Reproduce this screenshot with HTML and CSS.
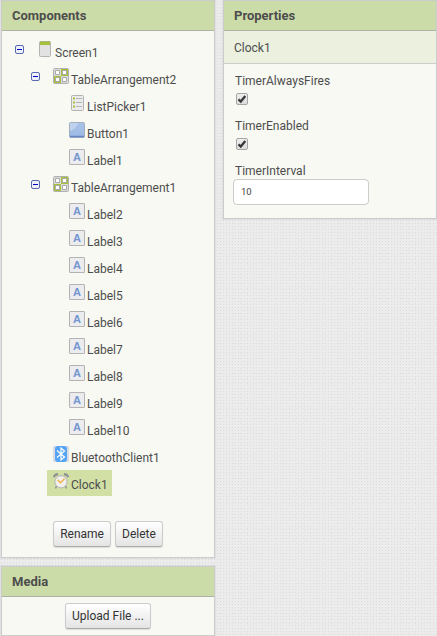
FILE: index.html
```html
<!DOCTYPE html>
<html lang="en">
<head>
<meta charset="utf-8">
<title>Designer</title>
<link rel="stylesheet" href="styles.css">
</head>
<body>
<svg class="defs" width="0" height="0">
  <symbol id="minus" viewBox="0 0 9 9"><rect x=".5" y=".5" width="8" height="8" rx="1.5" fill="#eef1fb" stroke="#5a6ab0"/><path d="M2 4.500h5" stroke="#0000c8"/></symbol>
  <symbol id="screen" viewBox="0 0 16 16"><rect x="2.500" y=".5" width="11" height="15" rx="1" fill="#e2e2e2" stroke="#b3b3b3"/><path d="M3 1h10v3H3z" fill="#a5c13c"/><path d="M3 .5h10" stroke="#a9b57e"/></symbol>
  <symbol id="table" viewBox="0 0 16 16"><rect x=".5" y=".5" width="15" height="15" rx="1" fill="#dcdcdc" stroke="#b0b0b0"/><path d="M8 1h7v7H8zM1 8h7v7H1z" fill="#a5c13c"/><g fill="#fff" stroke="#a9a9a9"><path d="M2.500 2.500h4v4h-4zM9.500 2.500h4v4h-4zM2.500 9.500h4v4h-4zM9.500 9.500h4v4h-4z"/></g></symbol>
  <symbol id="list" viewBox="0 0 16 16"><rect x="2.500" y=".5" width="12" height="15" rx="1" fill="#ebebeb" stroke="#b3b3b3"/><path d="M4 3.500h2M4 7.500h2M4 11.500h2" stroke="#a5c13c" stroke-width="2"/><path d="M7 3.500h6M7 7.500h6M7 11.500h6" stroke="#b5b5b5"/></symbol>
  <symbol id="button" viewBox="0 0 16 16"><defs><linearGradient id="bg" x2="0" y2="1"><stop stop-color="#a9c3e8"/><stop offset="1" stop-color="#9dbae5"/></linearGradient></defs><rect x=".5" y=".5" width="15" height="15" rx="1" fill="url(#bg)" stroke="#a3adbd"/><path d="M1 1h8Q8 6 1 9z" fill="#c0d3ee"/><path d="M1 14.500h14" stroke="#6487c4" stroke-width="1.500"/></symbol>
  <symbol id="bt" viewBox="0 0 16 16"><path d="M0 0h16v16H0z" fill="#d9dde3"/><rect x="2" y="0" width="12" height="16" rx="3" fill="#55a4f5"/><path d="M4 4.500l7.500 6.500L8 14V2l3.500 3L4 11.500" fill="none" stroke="#fff" stroke-width="1.200"/></symbol>
  <symbol id="clock" viewBox="0 0 16 16"><path d="M.8 4.200Q1.500 1.500 5 1M15.200 4.200Q14.500 1.500 11 1" fill="none" stroke="#939393" stroke-width="2.400"/><path d="M3.500 13L2.500 15.500M12.500 13l1 2.500" stroke="#939393" stroke-width="1.500"/><circle cx="8" cy="8.800" r="6.100" fill="#f2f0ed" stroke="#b5b5b5"/><path d="M4.500 6.800L7.500 9.800L11.500 5.800" fill="none" stroke="#f1b24f" stroke-width="1.500"/></symbol>
</svg>
<main class="page">
  <div class="column">
    <section class="panel components">
      <h2>Components</h2>
      <ul class="tree">
        <li class="l0"><svg class="toggle"><use href="#minus"/></svg><span class="item"><svg class="icon"><use href="#screen"/></svg>Screen1</span></li>
        <li class="l1"><svg class="toggle"><use href="#minus"/></svg><span class="item"><svg class="icon"><use href="#table"/></svg>TableArrangement2</span></li>
        <li class="l2"><span class="item"><svg class="icon"><use href="#list"/></svg>ListPicker1</span></li>
        <li class="l2"><span class="item"><svg class="icon"><use href="#button"/></svg>Button1</span></li>
        <li class="l2"><span class="item"><span class="icon letter">A</span>Label1</span></li>
        <li class="l1"><svg class="toggle"><use href="#minus"/></svg><span class="item"><svg class="icon"><use href="#table"/></svg>TableArrangement1</span></li>
        <li class="l2"><span class="item"><span class="icon letter">A</span>Label2</span></li>
        <li class="l2"><span class="item"><span class="icon letter">A</span>Label3</span></li>
        <li class="l2"><span class="item"><span class="icon letter">A</span>Label4</span></li>
        <li class="l2"><span class="item"><span class="icon letter">A</span>Label5</span></li>
        <li class="l2"><span class="item"><span class="icon letter">A</span>Label6</span></li>
        <li class="l2"><span class="item"><span class="icon letter">A</span>Label7</span></li>
        <li class="l2"><span class="item"><span class="icon letter">A</span>Label8</span></li>
        <li class="l2"><span class="item"><span class="icon letter">A</span>Label9</span></li>
        <li class="l2"><span class="item"><span class="icon letter">A</span>Label10</span></li>
        <li class="l1"><span class="item"><svg class="icon"><use href="#bt"/></svg>BluetoothClient1</span></li>
        <li class="l1"><span class="item selected"><svg class="icon"><use href="#clock"/></svg>Clock1</span></li>
      </ul>
      <div class="actions"><button>Rename</button><button>Delete</button></div>
    </section>
    <section class="panel media">
      <h2>Media</h2>
      <div class="actions"><button>Upload File ...</button></div>
    </section>
  </div>
  <section class="panel properties">
    <h2>Properties</h2>
    <div class="subject">Clock1</div>
    <div class="fields">
      <div class="field"><span>TimerAlwaysFires</span><svg class="check" viewBox="0 0 10 10"><path d="M1.500 5.300L3.800 7.500L8.300 2"/></svg></div>
      <div class="field"><span>TimerEnabled</span><svg class="check" viewBox="0 0 10 10"><path d="M1.500 5.300L3.800 7.500L8.300 2"/></svg></div>
      <div class="field"><span>TimerInterval</span><input type="text" value="10"></div>
    </div>
  </section>
</main>
</body>
</html>
```
FILE: styles.css
```css
* { box-sizing: border-box; }
body {
  margin: 0;
  height: 636px;
  overflow: hidden;
  font: 12px/18px Roboto, sans-serif;
  color: #4d4d4d;
  background-color: #ececec;
  background-image:
    radial-gradient(circle at 1.5px 1.5px, #dcdcdc 0.6px, transparent 0.8px),
    radial-gradient(circle at 2.5px 3.5px, #e0e0e0 0.8px, transparent 1px);
  background-size: 3px 3px, 7px 5px;
}
.defs { position: absolute; }
.page { display: flex; gap: 8px; align-items: flex-start; padding-left: 1px; }
.column { display: flex; flex-direction: column; gap: 8px; width: 214px; }
.panel { background: #f8f9f3; border: 1px solid #ccc; box-shadow: 0 0 1px 1px rgba(0, 0, 0, .05); }
.panel h2 {
  margin: 0;
  height: 30px;
  padding-left: 10px;
  font-size: 13px;
  line-height: 29px;
  background: #ccdca9;
  border-bottom: 1px solid #aeb1a6;
}
.components { height: 558px; }
.media { height: 70px; }
.tree { list-style: none; margin: 0; padding: 7px 0 0; }
.tree li { display: flex; align-items: flex-start; height: 27px; }
.l0 { padding-left: 13px; }
.l1 { padding-left: 29px; }
.l2 { padding-left: 61px; }
.toggle { width: 9px; height: 9px; margin: 7px -9px 0 0; }
.item { display: flex; height: 26px; margin-left: 16px; padding: 3px 6px 0; line-height: 24px; }
.l2 .item { margin-left: 0; }
.icon { width: 16px; height: 16px; margin-right: 2px; }
.letter {
  font: bold 11px/14px "Liberation Sans", sans-serif;
  text-align: center;
  color: #7396d1;
  background: #ececee;
  border: 1px solid #b3b3b3;
  border-radius: 1px;
}
.selected { padding-right: 4px; background: #d2e0a6; }
.actions { display: flex; gap: 4px; justify-content: center; }
.components .actions { padding-top: 24px; }
.media .actions { padding-top: 6px; }
button {
  height: 26px;
  padding: 0 6px;
  font: 12px/24px Roboto, sans-serif;
  color: #333;
  border: 1px solid #ccc;
  border-bottom-color: #aaa;
  border-radius: 3px;
  background: linear-gradient(#fff, #e4e4e4);
  box-shadow: 0 1px 1px #ddd;
}
.properties { width: 214px; height: 219px; }
.subject { height: 33px; padding-left: 10px; line-height: 34px; background: #ecf1df; border-bottom: 1px solid #ccc; }
.fields { padding: 8px 9px; }
.field { display: flex; flex-direction: column; height: 45px; }
.field span { padding-left: 2px; }
.check { width: 12px; height: 12px; margin: 3px 0 0 3px; border: 1px solid #a5a5a5; border-radius: 2px; background: linear-gradient(#eee, #ddd); }
.check path { fill: none; stroke: #383838; stroke-width: 2.3; }
input { width: 136px; height: 26px; margin-top: -1px; padding: 0 7px 2px; font: 9.5px Roboto, sans-serif; color: #444; border: 1px solid #ccc; border-radius: 4px; background: #fff; }
```
